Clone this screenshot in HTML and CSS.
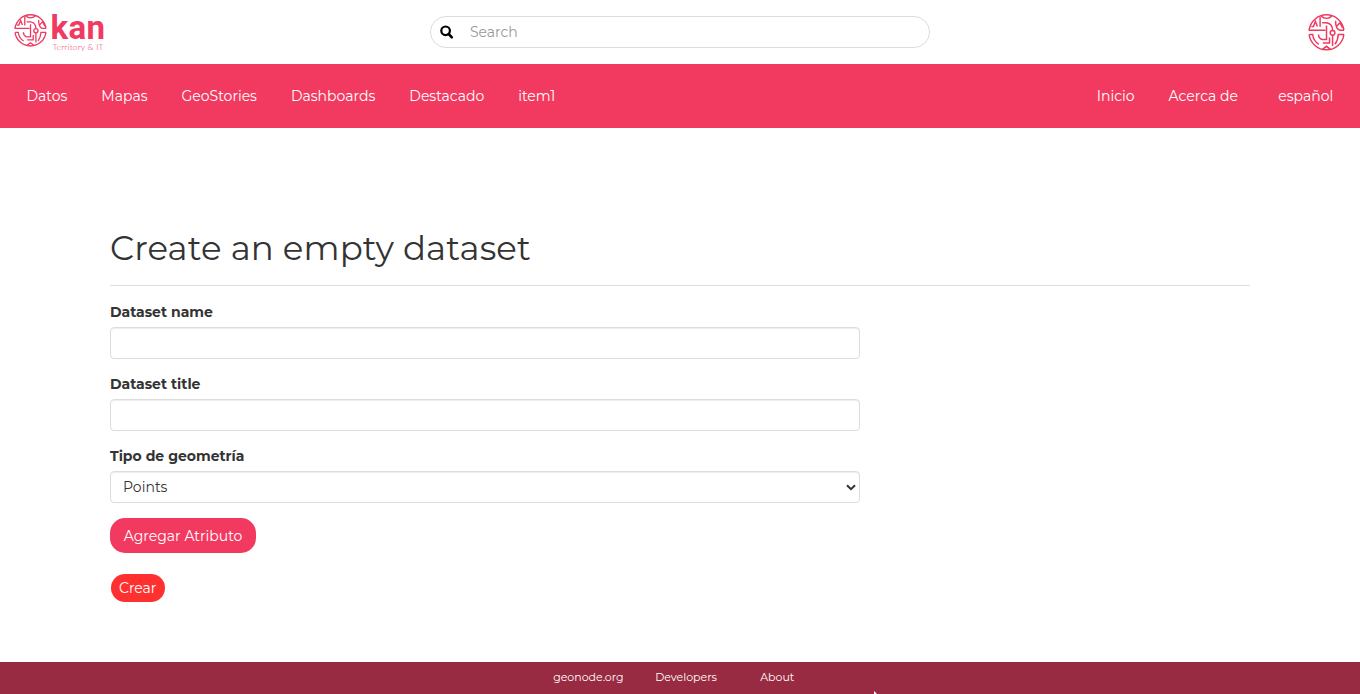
FILE: index.html
```html
<!DOCTYPE html>
<html lang="es">
<head>
<meta charset="utf-8">
<title>Create an empty dataset</title>
<link rel="stylesheet" href="styles.css">
</head>
<body>
<svg class="defs" aria-hidden="true">
  <symbol id="emblem" viewBox="52 42 110 110">
    <g fill="none" stroke="#ee3a60" stroke-width="4.4">
      <path d="M55.4 90A52 52 0 0 1 158.6 90M158.6 103A52 52 0 0 1 55.4 103"/>
      <path d="M91 48Q98 55 107 55T123 48M94 148L107 138L120 148"/>
      <path d="M54 90H104M88 50V80M62 79H68L74 64L80 79"/>
      <path d="M94 68H106Q125 70 125 91M125 105V137M159 90H146Q134 86 134 62M136 80L147 68L155 83"/>
      <path d="M107 76V118H94Q84 115 83 103M56 103H66Q68 122 84 132M96 128H116V112M159 103H142Q141 121 132 132"/>
      <circle cx="125" cy="98" r="7"/>
    </g>
  </symbol>
</svg>
<header class="top">
  <a class="brand">
    <svg class="brand-mark"><use href="#emblem"/></svg>
    <svg class="brand-name" width="56" height="44" viewBox="0 0 56 44">
      <text class="brand-kan" x="0.5" y="30" textLength="54.6" lengthAdjust="spacing">kan</text>
      <text class="brand-sub" x="2.5" y="41" textLength="51" lengthAdjust="spacing">Territory &amp; IT</text>
    </svg>
  </a>
  <div class="search">
    <svg width="14" height="14" viewBox="0 0 14 14"><circle cx="5.6" cy="5.8" r="4.3" fill="none" stroke="#000" stroke-width="2.2"/><path d="M8.7 9l3.1 3.3" stroke="#000" stroke-width="2.6" stroke-linecap="round"/></svg>
    <span>Search</span>
  </div>
  <svg class="avatar"><use href="#emblem"/></svg>
</header>
<nav class="nav">
  <div class="nav-group">
    <a>Datos</a><a>Mapas</a><a>GeoStories</a><a>Dashboards</a><a>Destacado</a><a>item1</a>
  </div>
  <div class="nav-group">
    <a>Inicio</a><a>Acerca de</a><a class="lang">español</a>
  </div>
</nav>
<main class="page">
  <h1>Create an empty dataset</h1>
  <form class="form">
    <label>Dataset name</label>
    <div class="control"></div>
    <label>Dataset title</label>
    <div class="control"></div>
    <label>Tipo de geometría</label>
    <div class="control select"><span>Points</span><svg width="10" height="7" viewBox="0 0 10 7"><path d="M1 1.2l4 4 4-4" fill="none" stroke="#333" stroke-width="2"/></svg></div>
    <a class="btn add">Agregar Atributo</a>
    <a class="btn create">Crear</a>
  </form>
</main>
<footer class="foot">
  <a class="f-geo">geonode.org</a><a class="f-dev">Developers</a><a>About</a>
  <svg class="pointer" width="4" height="3" viewBox="0 0 4 3"><path d="M0 0l3 3H0z" fill="#fff"/></svg>
</footer>
</body>
</html>
```
FILE: styles.css
```css
* { box-sizing: border-box; }
body { margin: 0; height: 694px; display: flex; flex-direction: column; overflow: hidden; background: #fff; color: #333; font: 400 14px/20px Montserrat, Inter, sans-serif; }
.defs { position: absolute; width: 0; height: 0; }
.top { height: 64px; flex: none; display: grid; grid-template-columns: 1fr 500px 1fr; align-items: center; padding: 0 15px; }
.brand { display: flex; align-items: flex-start; height: 44px; margin-left: -1px; }
.brand-mark { width: 33px; height: 33px; margin-top: 4px; }
.brand-name { margin: -1px 0 0 3px; overflow: visible; }
.brand-kan { font: 700 33px Roboto, sans-serif; fill: #f03a62; }
.brand-sub { font: 300 8.5px Lato, sans-serif; fill: #f03a62; }
.search { height: 32px; border: 1px solid #ddd; border-radius: 16px; display: flex; align-items: center; gap: 16px; padding-left: 9px; color: #999; }
.avatar { width: 37px; height: 37px; justify-self: end; margin-right: .5px; }
.nav { height: 64px; flex: none; background: #f23a60; color: #fff; display: flex; justify-content: space-between; align-items: center; padding: 0 26.7px 0 26.5px; }
.nav-group { display: flex; gap: 34px; }
.nav a { white-space: nowrap; }
.lang { margin-left: 6.3px; }
.page { width: 1140px; margin: 0 auto; padding-top: 99px; flex: 1; }
h1 { margin: 0 0 16px; height: 59px; border-bottom: 1px solid #ddd; font-size: 34px; line-height: 43px; font-weight: 400; letter-spacing: .09px; white-space: nowrap; }
.form { width: 750px; display: flex; flex-direction: column; align-items: flex-start; }
label { font-weight: 700; margin-bottom: 5px; white-space: nowrap; }
.control { width: 750px; height: 32px; margin-bottom: 15px; border: 1px solid #ddd; border-radius: 4px; box-shadow: inset 0 1px 1px rgba(0,0,0,.075); }
.select { display: flex; align-items: center; justify-content: space-between; padding: 0 3px 0 12px; }
.btn { color: #fff; display: flex; align-items: center; white-space: nowrap; }
.add { width: 146px; height: 35px; background: #f23a60; border-radius: 15px; padding-left: 13.8px; }
.create { width: 54px; height: 28px; margin: 21px 0 0 1px; background: #ff3030; border-radius: 14px; padding-left: 8px; }
.foot { position: relative; height: 32px; flex: none; background: #982a42; color: #fff; display: flex; padding: 5px 0 0 553.2px; font-size: 11px; }
.f-geo { width: 102px; }
.f-dev { width: 105px; }
.pointer { position: absolute; left: 874px; top: 29px; }
```
